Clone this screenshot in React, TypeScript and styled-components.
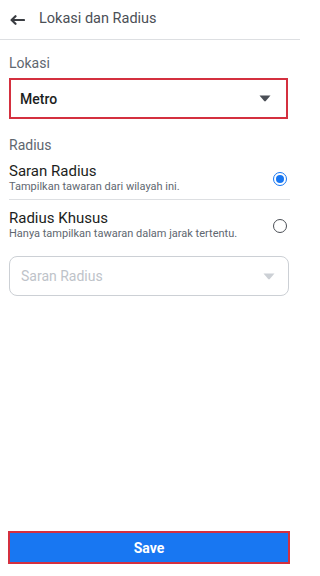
import React from "react";
import styled, { createGlobalStyle } from "styled-components";

const Global = createGlobalStyle`
  html, body { margin: 0; padding: 0; background: #fff; }
  body { font-family: Roboto, "Liberation Sans", Arial, sans-serif; -webkit-font-smoothing: antialiased; }
  * { box-sizing: border-box; }
`;

const Page = styled.div`
  width: 300px;
  height: 576px;
  display: flex;
  flex-direction: column;
  background: #fff;
`;

const Header = styled.header`
  height: 40px;
  display: flex;
  align-items: center;
  padding-left: 10px;
  border-bottom: 1px solid #dddfe2;
  flex-shrink: 0;
`;

const BackButton = styled.button`
  border: 0;
  background: none;
  padding: 0;
  width: 16px;
  height: 12px;
  display: flex;
  align-items: center;
  margin-right: 13px;
  color: #3a3d42;
`;

const Title = styled.h1`
  margin: 0;
  font-size: 14.5px;
  font-weight: 400;
  color: #4b4f56;
  line-height: 18px;
  padding-bottom: 1px;
`;

const Content = styled.main`
  flex: 1;
  padding: 0 10px 0 9px;
  display: flex;
  flex-direction: column;
`;

const SectionLabel = styled.div<{ $top: number }>`
  margin-top: ${(p) => p.$top}px;
  font-size: 14px;
  line-height: 18px;
  color: #606770;
`;

const SelectBox = styled.div<{ $disabled?: boolean; $highlight?: boolean }>`
  display: flex;
  align-items: center;
  justify-content: space-between;
  height: ${(p) => (p.$disabled ? 40 : 41)}px;
  margin-top: ${(p) => (p.$disabled ? 15 : 6)}px;
  margin-right: ${(p) => (p.$disabled ? 1 : 2)}px;
  padding: ${(p) => (p.$disabled ? "0 13px 0 11px" : "0 15px 0 9px")};
  border: ${(p) => (p.$highlight ? "2px solid #d4303f" : "1px solid #ccd0d5")};
  border-radius: ${(p) => (p.$disabled ? 8 : 0)}px;
  font-size: 14px;
  color: ${(p) => (p.$disabled ? "#bec3c9" : "#1c1e21")};
  font-weight: ${(p) => (p.$disabled ? 400 : 500)};
`;

const Caret = styled.svg<{ $color: string }>`
  width: 12px;
  height: 7px;
  fill: ${(p) => p.$color};
`;

const Option = styled.div<{ $top: number; $divider?: boolean }>`
  display: flex;
  align-items: center;
  justify-content: space-between;
  padding-top: ${(p) => p.$top}px;
  padding-bottom: ${(p) => (p.$divider ? 5 : 0)}px;
  border-bottom: ${(p) => (p.$divider ? "1px solid #dddfe2" : "none")};
`;

const OptionText = styled.div`
  display: flex;
  flex-direction: column;
`;

const OptionTitle = styled.div`
  font-size: 15px;
  line-height: 18px;
  color: #1c1e21;
`;

const OptionSub = styled.div`
  font-size: 11px;
  line-height: 14px;
  color: #606770;
`;

const Radio = styled.span<{ $checked?: boolean }>`
  width: 14px;
  height: 14px;
  border-radius: 50%;
  margin-right: 3px;
  margin-top: 2px;
  border: ${(p) => (p.$checked ? "1.5px solid #1877f2" : "1.5px solid #4b4f56")};
  display: flex;
  align-items: center;
  justify-content: center;
  flex-shrink: 0;
  &::after {
    content: "";
    width: 8px;
    height: 8px;
    border-radius: 50%;
    background: ${(p) => (p.$checked ? "#1877f2" : "transparent")};
  }
`;

const Footer = styled.footer`
  padding: 0 10px 12px 8px;
  flex-shrink: 0;
`;

const SaveButton = styled.button`
  width: 100%;
  height: 33px;
  background: #1877f2;
  border: 2px solid #d4303f;
  color: #fff;
  font-family: Roboto, "Liberation Sans", Arial, sans-serif;
  font-weight: 700;
  font-size: 14px;
  padding: 0;
`;

const CaretIcon = ({ color }: { color: string }) => (
  <Caret $color={color} viewBox="0 0 12 7">
    <path d="M0.5 0.5 L11.5 0.5 L6.8 6 Q6 6.8 5.2 6 Z" />
  </Caret>
);

export default function App() {
  return (
    <>
      <Global />
      <Page>
        <Header>
          <BackButton aria-label="Kembali">
            <svg width="15" height="10" viewBox="0 0 15 10" fill="none" stroke="currentColor" strokeWidth="2.2" strokeLinecap="round" strokeLinejoin="round">
              <path d="M14 5H2" />
              <path d="M5.5 1.2L1.6 5l3.9 3.8" />
            </svg>
          </BackButton>
          <Title>Lokasi dan Radius</Title>
        </Header>
        <Content>
          <SectionLabel $top={14}>Lokasi</SectionLabel>
          <SelectBox $highlight>
            <span>Metro</span>
            <CaretIcon color="#4b4f56" />
          </SelectBox>
          <SectionLabel $top={17}>Radius</SectionLabel>
          <Option $top={8} $divider>
            <OptionText>
              <OptionTitle>Saran Radius</OptionTitle>
              <OptionSub>Tampilkan tawaran dari wilayah ini.</OptionSub>
            </OptionText>
            <Radio $checked />
          </Option>
          <Option $top={9}>
            <OptionText>
              <OptionTitle>Radius Khusus</OptionTitle>
              <OptionSub>Hanya tampilkan tawaran dalam jarak tertentu.</OptionSub>
            </OptionText>
            <Radio />
          </Option>
          <SelectBox $disabled>
            <span>Saran Radius</span>
            <CaretIcon color="#ccd0d5" />
          </SelectBox>
        </Content>
        <Footer>
          <SaveButton>Save</SaveButton>
        </Footer>
      </Page>
    </>
  );
}
